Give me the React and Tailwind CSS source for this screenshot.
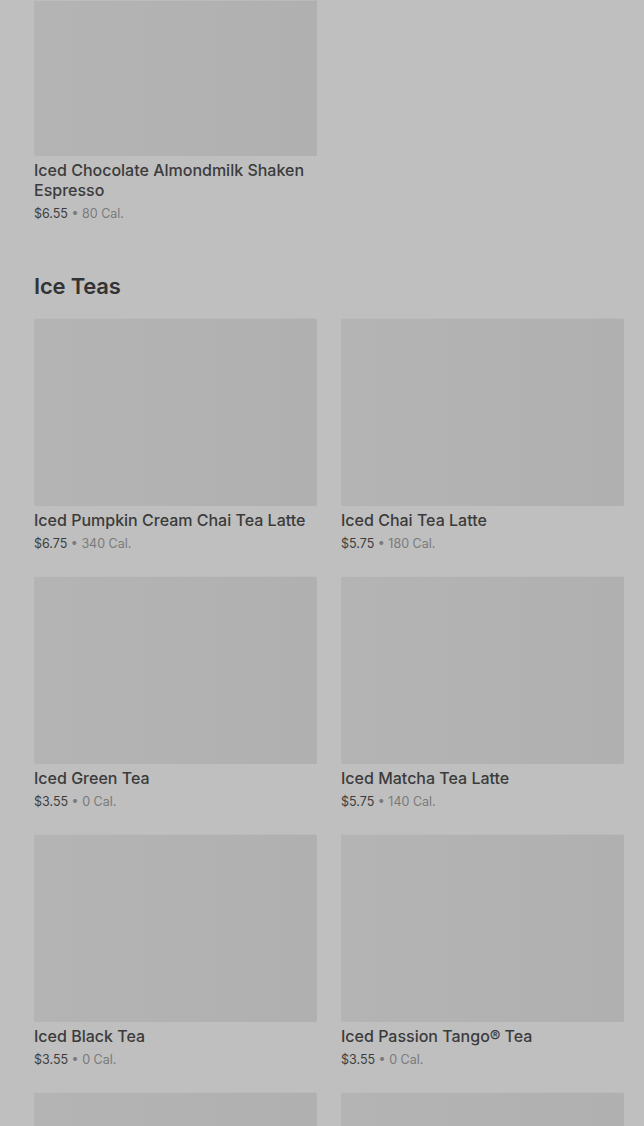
// App.jsx
// Menu category listing shown under a dimmed overlay: product tiles with name, price and calories.
const products = [
  { name: 'Iced Pumpkin Cream Chai Tea Latte', price: '$6.75', cal: '340 Cal.' },
  { name: 'Iced Chai Tea Latte', price: '$5.75', cal: '180 Cal.' },
  { name: 'Iced Green Tea', price: '$3.55', cal: '0 Cal.' },
  { name: 'Iced Matcha Tea Latte', price: '$5.75', cal: '140 Cal.' },
  { name: 'Iced Black Tea', price: '$3.55', cal: '0 Cal.' },
  { name: 'Iced Passion Tango® Tea', price: '$3.55', cal: '0 Cal.' },
];

const Placeholder = ({ className = '' }) => (
  <div
    className={`w-full rounded-[2px] bg-gradient-to-r from-[#b4b4b4] to-[#b0b0b0] shadow-[inset_0_1px_0_rgba(255,255,255,0.12)] ${className}`}
  />
);

const Meta = ({ price, cal }) => (
  <p className="mt-[6px] text-[12.5px] leading-4 text-[#3d3d3d]">
    {price}
    <span className="text-[#7a7a7a]"> • {cal}</span>
  </p>
);

const ProductCard = ({ name, price, cal }) => (
  <div className="flex flex-col">
    <Placeholder className="h-[188px]" />
    <h3 className="mt-[4px] text-[16px] font-medium leading-5 text-[#3b3b3b]">{name}</h3>
    <Meta price={price} cal={cal} />
  </div>
);

export default function App() {
  return (
    <div
      className="h-[1126px] w-full overflow-hidden bg-[#bfbfbf] pl-[34px] pr-[20px]"
      style={{ fontFamily: 'Inter, "Noto Sans", sans-serif' }}
    >
      <div className="grid grid-cols-2 gap-x-[24px]">
        <div className="flex flex-col">
          <Placeholder className="h-[156px] rounded-t-none" />
          <h3 className="mt-[4px] text-[16px] font-medium leading-5 text-[#3b3b3b]">
            Iced Chocolate Almondmilk Shaken Espresso
          </h3>
          <Meta price="$6.55" cal="80 Cal." />
        </div>
      </div>

      <h2 className="mt-[48px] text-[22px] font-semibold leading-8 tracking-[-0.2px] text-[#333333]">
        Ice Teas
      </h2>

      <div className="mt-[16px] grid grid-cols-2 gap-x-[24px] gap-y-[24px]">
        {products.map((p) => (
          <ProductCard key={p.name} {...p} />
        ))}
        <Placeholder className="h-[188px]" />
        <Placeholder className="h-[188px]" />
      </div>
    </div>
  );
}
